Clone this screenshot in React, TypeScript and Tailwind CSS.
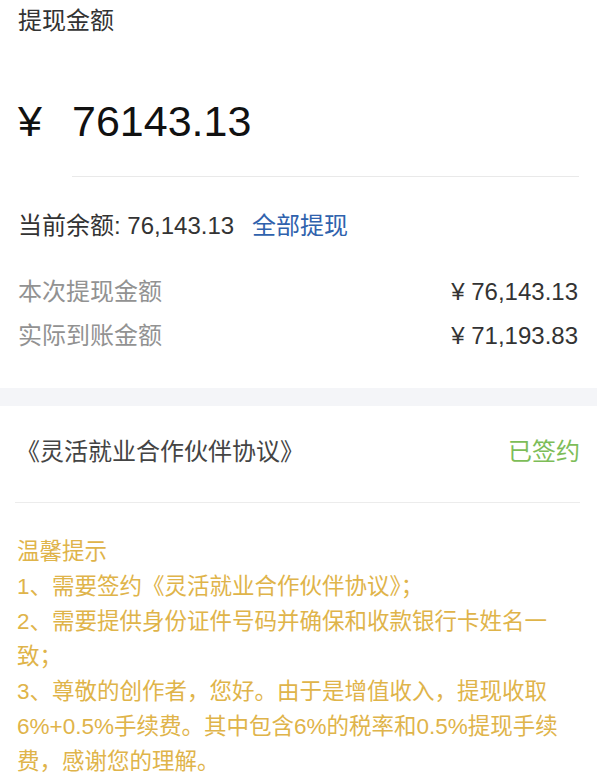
export default function App() {
  const tips = [
    "温馨提示",
    "1、需要签约《灵活就业合作伙伴协议》；",
    "2、需要提供身份证件号码并确保和收款银行卡姓名一",
    "致；",
    "3、尊敬的创作者，您好。由于是增值收入，提现收取",
    "6%+0.5%手续费。其中包含6%的税率和0.5%提现手续",
    "费，感谢您的理解。",
  ];

  return (
    <div className="w-[597px] h-[783px] overflow-hidden bg-white font-['Liberation_Sans','Noto_Sans_CJK_SC',sans-serif]">
      {/* amount section */}
      <div className="px-[18px] pt-[9px]">
        <div className="text-[24px] leading-[24px] text-[#333]">提现金额</div>
        <div className="mt-[67px] flex items-center text-[43px] leading-[43px] text-[#111]">
          <span className="w-[54px]">¥</span>
          <span>76143.13</span>
        </div>
        <div className="ml-[54px] mt-[33px] h-px bg-[#e9e9e9]" />

        <div className="mt-[37px] flex items-center text-[24px] leading-[24px]">
          <span className="text-[#333]">当前余额: 76,143.13</span>
          <span className="ml-[18px] text-[#2f62ad]">全部提现</span>
        </div>

        <div className="mt-[42px] flex justify-between text-[24px] leading-[24px]">
          <span className="text-[#929292]">本次提现金额</span>
          <span className="pr-px text-[#333]">¥ 76,143.13</span>
        </div>
        <div className="mt-[20px] flex justify-between text-[24px] leading-[24px]">
          <span className="text-[#929292]">实际到账金额</span>
          <span className="pr-px text-[#333]">¥ 71,193.83</span>
        </div>
      </div>

      <div className="mt-[40px] h-[18px] bg-[#f4f5f8]" />

      {/* agreement */}
      <div className="mt-[34px] flex justify-between pl-[16px] pr-[17px] text-[24px] leading-[24px]">
        <span className="text-[#444]">《灵活就业合作伙伴协议》</span>
        <span className="text-[#7dbd58]">已签约</span>
      </div>
      <div className="ml-[15px] mr-[17px] mt-[38px] h-px bg-[#ececec]" />

      {/* tips */}
      <div className="mt-[31px] pl-[17px] text-[22.5px] leading-[35px] text-[#dfb44a]">
        {tips.map((line) => (
          <div key={line} className="whitespace-nowrap">
            {line}
          </div>
        ))}
      </div>
    </div>
  );
}
